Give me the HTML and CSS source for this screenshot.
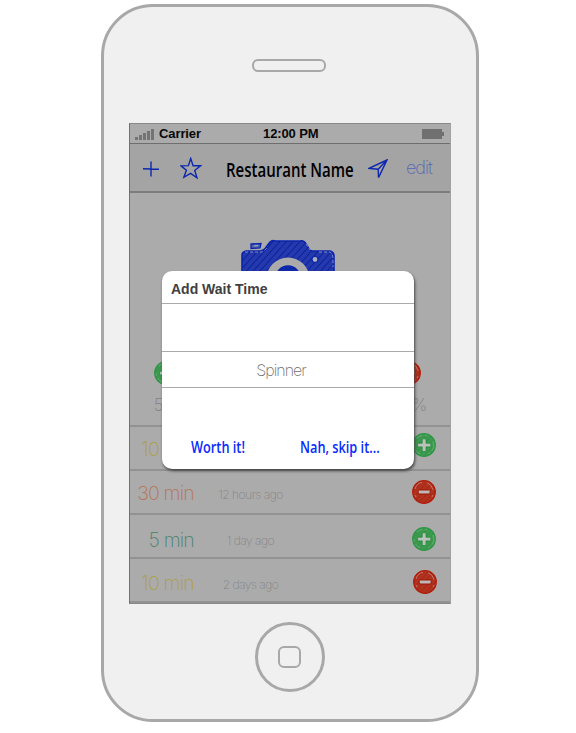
FILE: index.html
```html
<!DOCTYPE html>
<html lang="en">
<head>
<meta charset="utf-8">
<title>Restaurant Name</title>
<link rel="stylesheet" href="styles.css">
</head>
<body>
<svg class="defs" aria-hidden="true">
  <defs>
    <pattern id="blue-hatch" width="5" height="5" patternUnits="userSpaceOnUse" patternTransform="rotate(42)"><rect width="5" height="5" fill="#2439ad"/><path d="M0 0V5" stroke="#0d229b" stroke-width="2"/></pattern>
    <pattern id="green-hatch" width="4" height="4" patternUnits="userSpaceOnUse" patternTransform="rotate(42)"><rect width="4" height="4" fill="#3d9a4f"/><path d="M0 0V4" stroke="#2f9244" stroke-width="1.5"/></pattern>
    <pattern id="red-hatch" width="4" height="4" patternUnits="userSpaceOnUse" patternTransform="rotate(42)"><rect width="4" height="4" fill="#b03320"/><path d="M0 0V4" stroke="#a92411" stroke-width="1.5"/></pattern>
    <symbol id="plus" viewBox="0 0 24 24">
      <circle cx="12" cy="12" r="11.3" fill="url(#green-hatch)" stroke="#2c9645" stroke-width="1.2"/>
      <circle cx="12" cy="12" r="9.8" fill="none" stroke="#83b48b" stroke-width=".7" stroke-dasharray="6 3 2 8"/>
      <path d="M10.2 5.8h3.8v4.4h4.8v3.7h-4.8v4.6h-3.8v-4.6H5.6v-3.7h4.6z" fill="#bcc1bc" stroke="#258d3d" stroke-width=".8"/>
    </symbol>
    <symbol id="minus" viewBox="0 0 24 24">
      <circle cx="12" cy="12" r="11.3" fill="url(#red-hatch)" stroke="#b01c08" stroke-width="1.2"/>
      <path d="M3 9Q5 3 10 2.4M15 2.7q5 2 6 7M3 15l1 2M21 15l-1 2" fill="none" stroke="#c58a80" stroke-width=".8"/>
      <path d="M6 10h12.4l-.6 4H6.4z" fill="#c0b8b6" stroke="#9c1708" stroke-width="1"/>
    </symbol>
  </defs>
</svg>
<div class="phone">
  <div class="speaker"></div>
  <main class="screen">
    <div class="status">
      <svg class="signal" viewBox="0 0 19 11"><path d="M0 8h3v3H0zM4 6h3v5H4zM8 4h3v7H8zM12 2h3v9h-3zM16 0h3v11h-3z" fill="#747474"/></svg>
      <span class="carrier">Carrier</span>
      <span class="clock">12:00 PM</span>
      <svg class="battery" viewBox="0 0 22 10"><path d="M0 0h20v3h2v4h-2v3H0z" fill="#707070"/></svg>
    </div>
    <header class="nav">
      <svg class="add" viewBox="0 0 16 16"><path d="M8 .5V15.5M0 7.8l16 .5" stroke="#0d27ae" stroke-width="1.4"/></svg>
      <svg class="star" viewBox="0 0 22 22"><path d="M10.7 1.5l2.4 7.2 7.8-.1-6.2 4.9 2.3 7.3-6.4-4.4-6.7 3.9 2.5-7L1 8.8l7.4-.2z" fill="none" stroke="#0d27ae" stroke-width="1.4"/></svg>
      <h1 class="title"><span>Restaurant Name</span></h1>
      <svg class="locate" viewBox="0 0 20 20"><path d="M19 1L1 9.4l9.2.8.3 8.4zM19 1l-8.8 9.2" fill="none" stroke="#0d27ae" stroke-width="1.4"/></svg>
      <span class="edit">edit</span>
    </header>
    <section class="summary">
      <svg class="camera" viewBox="0 0 94 76">
        <path d="M1 16q0-3 4-4h14q4 0 7-5l3-4q2-2 5-1h25q4-1 6 3l3 5q1 2 4 2h17q4 1 4 5v53q0 5-5 5H6q-5 0-5-5z" fill="url(#blue-hatch)" stroke="#0a25ad" stroke-width="1.6"/>
        <path d="M4 13h17q4-2 6-6M65 5l4 6M78 13h11q3 2 3 7v8" fill="none" stroke="#9da5c8" stroke-width=".8" stroke-dasharray="3 2"/>
        <path d="M10 5l10-.5-1 4.5-9 .5z" fill="#5363ab" stroke="#0a25ad" stroke-width="1.3"/>
        <path d="M13 7l4-.5" stroke="#adb2c4"/>
        <circle cx="47" cy="40" r="21.5" fill="#ababab"/><circle cx="47" cy="39" r="12" fill="#0f29a9" stroke="#0a25ad" stroke-width="1.5"/>
        <circle cx="74" cy="20.5" r="3" fill="#abb0be" stroke="#0a25ad" stroke-width="1.2"/>
      </svg>
      <div class="votes">
        <div class="vote"><svg class="badge"><use href="#plus"/></svg><span>50%</span></div>
        <div class="vote"><svg class="badge"><use href="#minus"/></svg><span>50%</span></div>
      </div>
    </section>
    <div class="row first"><span class="wait yellow">10 min</span><span class="ago"></span><svg class="badge"><use href="#plus"/></svg></div>
    <div class="row second"><span class="wait orange">30 min</span><span class="ago">12 hours ago</span><svg class="badge"><use href="#minus"/></svg></div>
    <div class="row third"><span class="wait green">5 min</span><span class="ago">1 day ago</span><svg class="badge"><use href="#plus"/></svg></div>
    <div class="row fourth"><span class="wait yellow">10 min</span><span class="ago">2 days ago</span><svg class="badge"><use href="#minus"/></svg></div>
    <div class="dialog" role="dialog">
      <h2>Add Wait Time</h2>
      <div class="space"></div>
      <div class="spinner">Spinner</div>
      <div class="actions"><span class="worth">Worth it!</span><span class="skip">Nah, skip it...</span></div>
    </div>
  </main>
  <div class="home"><div class="square"></div></div>
</div>
</body>
</html>
```
FILE: styles.css
```css
* { box-sizing: border-box; }
body { margin: 0; height: 733px; overflow: hidden; background: #fff; font-family: "Liberation Sans", sans-serif; }
svg { display: block; flex: none; }
.defs { position: absolute; width: 0; height: 0; }
.phone { width: 378px; height: 718px; margin: 4px 0 0 101px; border: 3px solid #a8a8a8; border-radius: 52px; background: #f0f0f0; display: flow-root; }
.speaker { width: 74px; height: 13px; margin: 52px 0 0 148px; border: 2px solid #a8a8a8; border-radius: 6px; }
.screen { position: relative; width: 322px; height: 481px; margin: 51px 0 0 25px; background: #ababab; border: 1px solid #888; border-left-color: #707070; border-right-color: #a2a2a2; }
.status { display: flex; align-items: center; height: 20px; padding: 0 5px; border-bottom: 1px solid #6e6e6e; font-size: 13px; font-weight: 700; color: #080808; }
.signal { width: 19px; height: 11px; margin-top: 2px; }
.carrier { width: 104px; margin-left: 5px; letter-spacing: -.1px; }
.clock { font-size: 13px; letter-spacing: -.1px; }
.battery { width: 22px; height: 10px; margin: 1px 1px 0 auto; }
.nav { display: flex; height: 49px; padding-left: 13px; background: #a4a4a4; border-bottom: 2px solid #7c7c7c; }
.add { width: 16px; height: 16px; margin-top: 17px; }
.star { width: 22px; height: 22px; margin: 13px 0 0 21px; }
.title { width: 127px; margin: 13px 0 0 24px; font: italic 600 19px/26px "Open Sans", sans-serif; font-style: normal; white-space: nowrap; color: #000; }
.title span { display: inline-block; transform: scaleX(.79); transform-origin: left; }
.locate { width: 20px; height: 20px; margin: 15px 0 0 15px; }
.edit { margin: 12px 0 0 18px; font: 200 18px/24px Inter, sans-serif; letter-spacing: -1px; color: #5267b5; }
.summary { height: 232px; padding-top: 46px; }
.camera { width: 94px; height: 76px; margin-left: 111px; }
.votes { display: flex; justify-content: space-between; margin: 46px 20px 0 22px; }
.vote { display: grid; justify-items: center; width: 40px; font: 200 17px/22px Inter, sans-serif; letter-spacing: -1px; color: #808080; }
.vote span { margin-top: 9px; }
.vote:first-child { margin-left: -2px; }
.vote:first-child .badge { margin-left: -8px; }
.vote:last-child .badge { margin-right: 2px; }
.badge { width: 24px; height: 24px; }
.row { display: grid; grid-template-columns: 64px 113px 1fr; height: 44px; border-top: 2px solid #929292; color: #858585; }
.wait { text-align: right; font: 200 19.5px/24px Inter, sans-serif; letter-spacing: -.8px; margin-top: 10px; }
.ago { text-align: center; font: 200 12px/18px Inter, sans-serif; letter-spacing: -.5px; margin-top: 15px; }
.row .badge { margin: 6px 0 0 105px; }
.second .badge { margin-top: 9px; }
.fourth .badge { margin-top: 11px; }
.third .badge { margin-top: 12px; }
.third .wait { margin-top: 13px; }
.fourth .wait { margin-top: 12px; }
.third .ago { margin-top: 17px; }
.fourth .ago { margin-top: 17px; }
.yellow { color: #ad9e45; }
.orange { color: #b67354; }
.green { color: #47826b; }
.row.fourth .badge { margin-left: 106px; }
.fourth { height: 46px; border-bottom: 2px solid #929292; }
.dialog { position: absolute; left: 32px; top: 147px; width: 252px; height: 198px; border-radius: 10px; background: #fff; box-shadow: 1px 2px 3px #444; overflow: hidden; }
.dialog h2 { height: 33px; margin: 0; padding-left: 9px; border-bottom: 1px solid #aaa; font: 700 14px/36px "Liberation Sans", sans-serif; color: #404040; }
.space { height: 48px; border-bottom: 1px solid #aaa; }
.spinner { height: 36px; padding-right: 14px; border-bottom: 1px solid #aaa; font: 200 16px/36px Inter, sans-serif; letter-spacing: -1px; text-align: center; color: #707070; }
.actions { display: flex; padding: 46px 0 0 29px; font: 600 17px/26px "Open Sans", sans-serif; color: #082cff; white-space: nowrap; }
.worth, .skip { transform: scaleX(.75); transform-origin: left; }
.worth { width: 109px; }
.home { display: grid; place-items: center; width: 70px; height: 70px; margin: 18px 0 0 151px; border: 3px solid #a8a8a8; border-radius: 50%; }
.square { width: 23px; height: 22px; margin-right: 1px; border: 2px solid #a8a8a8; border-radius: 6px; }
```
